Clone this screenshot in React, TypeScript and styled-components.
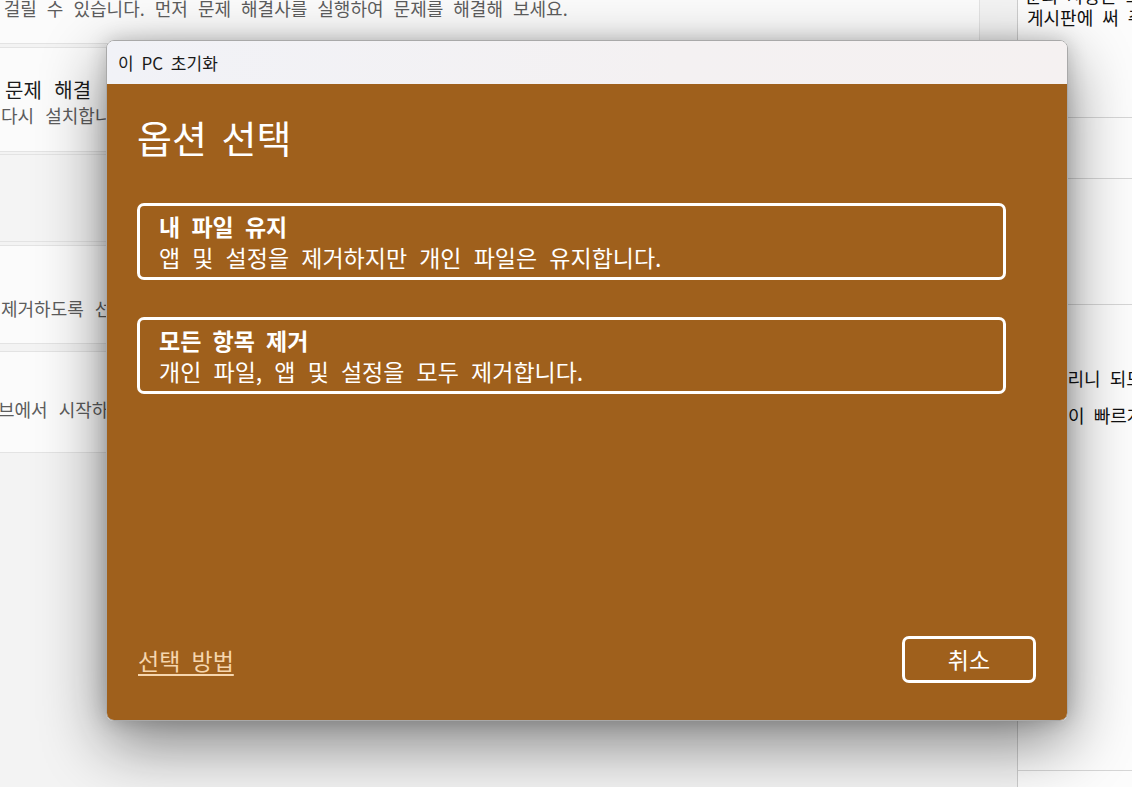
import React from "react";
import styled, { createGlobalStyle } from "styled-components";

const Global = createGlobalStyle`
  html, body { margin: 0; padding: 0; }
  body {
    width: 1132px;
    height: 787px;
    overflow: hidden;
    background: #f3f3f3;
    font-family: "Noto Sans CJK KR", "Noto Sans", sans-serif;
  }
`;

const Page = styled.div`
  position: relative;
  display: flex;
  width: 1132px;
  height: 787px;
  overflow: hidden;
  background: #f3f3f3;
`;

const Main = styled.main`
  flex: none;
  width: 1018px;
  box-sizing: border-box;
  border-right: 1px solid #cdcdcd;
  overflow: hidden;
  display: flex;
  flex-direction: column;
`;

const CardList = styled.div`
  display: flex;
  flex-direction: column;
  margin-top: -20px;
  margin-left: -20px;
  width: 1000px;
`;

const Card = styled.div<{ $h: number; $gap: number; $tone?: string; $pt?: number; $pb?: number }>`
  box-sizing: border-box;
  height: ${(p) => p.$h}px;
  margin-top: ${(p) => p.$gap}px;
  padding-left: 20px;
  padding-top: ${(p) => p.$pt ?? 0}px;
  padding-bottom: ${(p) => p.$pb ?? 0}px;
  background: ${(p) => p.$tone ?? "#fbfbfb"};
  border: 1px solid #e3e3e3;
  border-radius: 4px;
  display: flex;
  flex-direction: column;
  justify-content: center;
  white-space: nowrap;
`;

const CardTitle = styled.div<{ $indent?: number }>`
  margin-left: ${(p) => p.$indent ?? 0}px;
  font-size: 20px;
  line-height: 26px;
  color: #1b1b1b;
  word-spacing: 8px;
`;

const CardDesc = styled.div<{ $indent?: number; $ws?: number }>`
  margin-left: ${(p) => p.$indent ?? 0}px;
  font-size: 18px;
  line-height: 24px;
  color: #5d5d5d;
  word-spacing: ${(p) => p.$ws ?? 7}px;
`;

const Side = styled.aside`
  flex: 1;
  background: #fcfcfc;
  display: flex;
  flex-direction: column;
  overflow: hidden;
`;

const SideSection = styled.div<{ $h: number }>`
  box-sizing: border-box;
  flex: none;
  height: ${(p) => p.$h}px;
  border-bottom: 1px solid #d6d6d6;
  white-space: nowrap;
`;

const SideLine = styled.div<{ $indent: number; $top?: number }>`
  padding-left: ${(p) => p.$indent}px;
  margin-top: ${(p) => p.$top ?? 0}px;
  font-size: 18px;
  line-height: 24px;
  color: #111;
  word-spacing: 5px;
`;

const Dialog = styled.section`
  position: absolute;
  left: 106px;
  top: 40px;
  width: 962px;
  height: 681px;
  box-sizing: border-box;
  border: 1px solid #a9a9a9;
  border-radius: 8px;
  overflow: hidden;
  display: flex;
  flex-direction: column;
  box-shadow: 0 22px 64px rgba(0, 0, 0, 0.48), 0 0 20px rgba(0, 0, 0, 0.18);
`;

const TitleBar = styled.header`
  flex: none;
  height: 43px;
  display: flex;
  align-items: center;
  padding-left: 11px;
  background: linear-gradient(90deg, #f1f2f7 0%, #f4f1f2 60%, #f5f1f1 100%);
  font-size: 17px;
  color: #1a1a1a;
  word-spacing: 4px;
`;

const Body = styled.div`
  flex: 1;
  display: flex;
  flex-direction: column;
  background: #9f601c;
  padding: 30px 31px 37px 30px;
  color: #fff;
`;

const Heading = styled.h1`
  margin: 0;
  font-size: 38px;
  line-height: 46px;
  font-weight: 400;
  word-spacing: 6px;
`;

const Options = styled.div`
  margin-top: 43px;
  display: flex;
  flex-direction: column;
  gap: 37px;
`;

const Option = styled.button`
  box-sizing: border-box;
  width: 869px;
  height: 77px;
  border: 3px solid #fff;
  border-radius: 7px;
  background: transparent;
  color: #fff;
  padding: 1px 19px 0;
  display: flex;
  flex-direction: column;
  justify-content: center;
  align-items: flex-start;
  text-align: left;
  font-family: inherit;
  cursor: pointer;
`;

const OptionTitle = styled.span`
  font-size: 23px;
  line-height: 31px;
  font-weight: 700;
  word-spacing: 6px;
`;

const OptionDesc = styled.span`
  font-size: 23px;
  line-height: 31px;
  font-weight: 400;
  word-spacing: 7px;
`;

const Footer = styled.footer`
  margin-top: auto;
  display: flex;
  align-items: center;
  justify-content: space-between;
`;

const HelpLink = styled.a`
  font-size: 23px;
  line-height: 30px;
  color: #f6d6ae;
  text-decoration: underline;
  text-underline-offset: 4px;
  text-decoration-thickness: 2px;
  word-spacing: 6px;
  margin-left: 1px;
  cursor: pointer;
`;

const CancelButton = styled.button`
  box-sizing: border-box;
  width: 134px;
  height: 47px;
  border: 3px solid #fff;
  border-radius: 7px;
  background: transparent;
  color: #fff;
  font-family: inherit;
  font-size: 23px;
  line-height: 1;
  display: flex;
  align-items: center;
  justify-content: center;
  cursor: pointer;
`;

export default function App() {
  return (
    <>
      <Global />
      <Page>
        <Main>
          <CardList>
            <Card $h={64} $gap={0} $pb={8}>
              <CardDesc $indent={-57} $ws={6}>
                시간이 걸릴 수 있습니다. 먼저 문제 해결사를 실행하여 문제를 해결해 보세요.
              </CardDesc>
            </Card>
            <Card $h={105} $gap={3} $pt={5}>
              <CardTitle $indent={4}>문제 해결</CardTitle>
              <CardDesc>다시 설치합니다. 이 PC를 초기화하기 전에 문제를 해결해 보세요.</CardDesc>
            </Card>
            <Card $h={88} $gap={2} $tone="#f4f4f4">
              <CardTitle> </CardTitle>
            </Card>
            <Card $h={99} $gap={3} $pt={26}>
              <CardDesc>제거하도록 선택한 다음 Windows를 다시 설치합니다.</CardDesc>
            </Card>
            <Card $h={102} $gap={7} $pt={14}>
              <CardDesc $indent={-3}>브에서 시작하여 PC 문제를 해결합니다.</CardDesc>
            </Card>
          </CardList>
        </Main>
        <Side>
          <SideSection $h={118}>
            <SideLine $indent={7} $top={-17}>
              문의 사항은 고객센터 게시판으로
            </SideLine>
            <SideLine $indent={9} $top={-2}>
              게시판에 써 주세요
            </SideLine>
          </SideSection>
          <SideSection $h={61} />
          <SideSection $h={126} />
          <SideSection $h={466}>
            <SideLine $indent={33} $top={61}>
              드리니 되도록 빨리
            </SideLine>
            <SideLine $indent={17} $top={13}>
              확인이 빠르게 처리됩니다
            </SideLine>
          </SideSection>
        </Side>

        <Dialog role="dialog" aria-label="이 PC 초기화">
          <TitleBar>이 PC 초기화</TitleBar>
          <Body>
            <Heading>옵션 선택</Heading>
            <Options>
              <Option>
                <OptionTitle>내 파일 유지</OptionTitle>
                <OptionDesc>앱 및 설정을 제거하지만 개인 파일은 유지합니다.</OptionDesc>
              </Option>
              <Option>
                <OptionTitle>모든 항목 제거</OptionTitle>
                <OptionDesc>개인 파일, 앱 및 설정을 모두 제거합니다.</OptionDesc>
              </Option>
            </Options>
            <Footer>
              <HelpLink>선택 방법</HelpLink>
              <CancelButton>취소</CancelButton>
            </Footer>
          </Body>
        </Dialog>
      </Page>
    </>
  );
}
